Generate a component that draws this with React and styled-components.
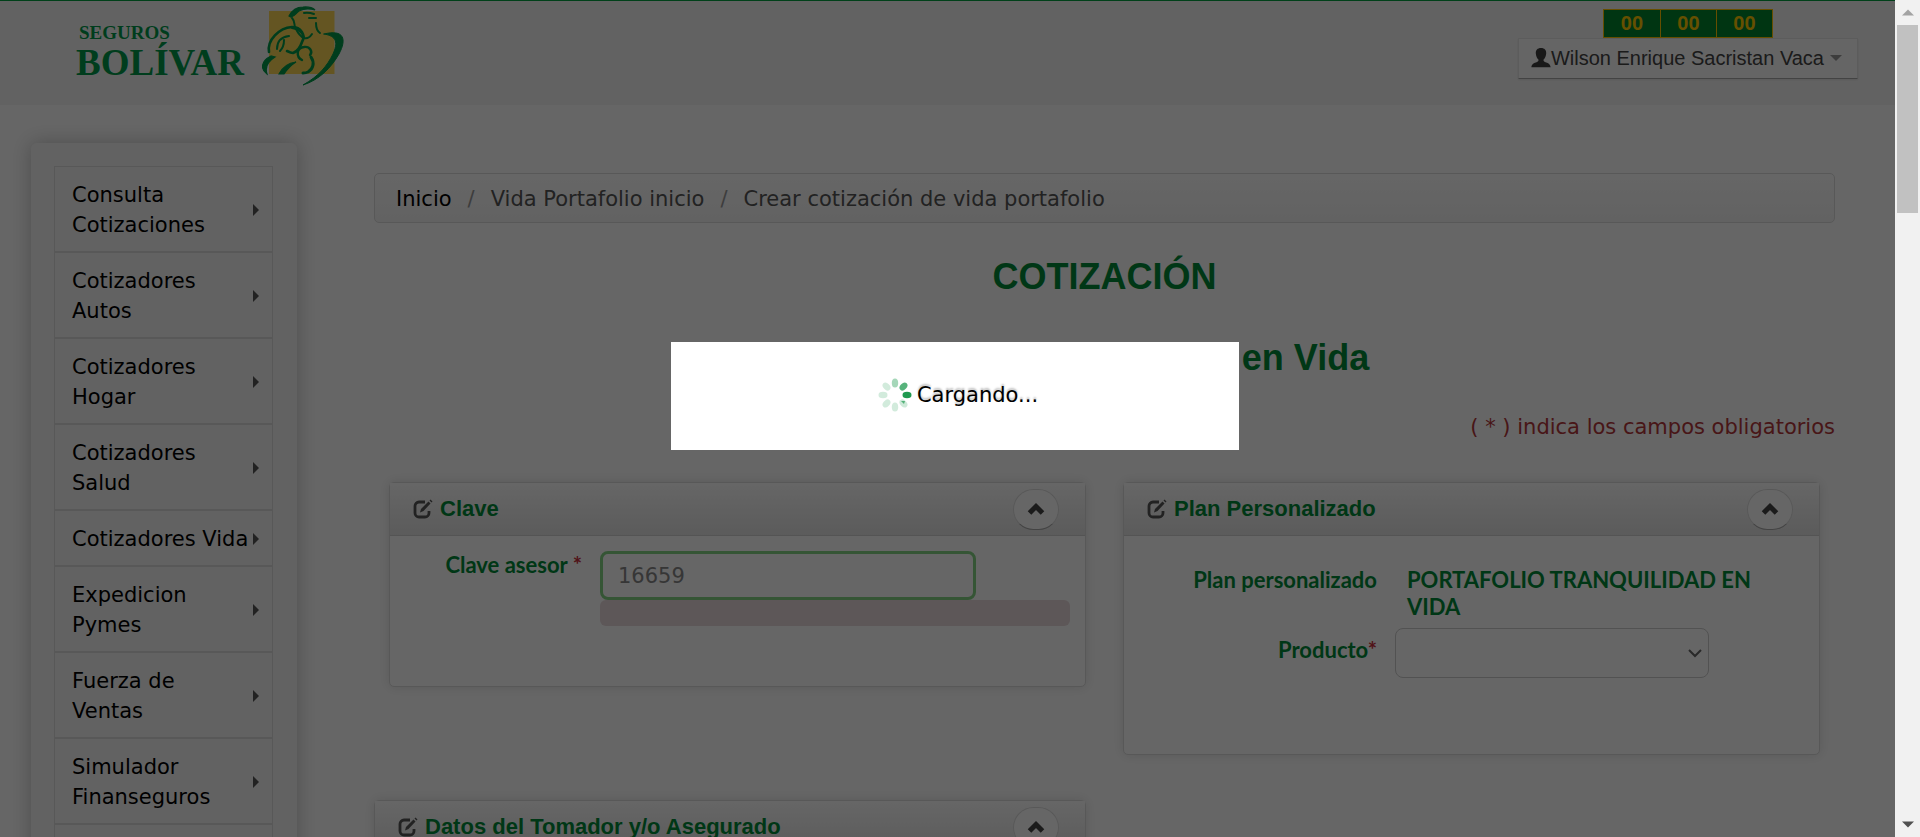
import React from 'react';
import styled, { createGlobalStyle } from 'styled-components';

const GREEN = '#008a37';
const SANS = '"DejaVu Sans", Verdana, sans-serif';
const ARIAL = '"Liberation Sans", Arial, sans-serif';
const LATO = 'Lato, "Liberation Sans", sans-serif';

const GlobalStyle = createGlobalStyle`
  *, *::before, *::after { box-sizing: border-box; }
  body { margin: 0; background: #fff; color: #000; font: 21px/30px ${SANS}; overflow: hidden; }
  a { color: inherit; text-decoration: none; }
`;

const Shell = styled.div`
  display: flex;
  height: 100vh;
`;

const Viewport = styled.div`
  position: relative;
  flex: 1;
  min-width: 0;
  overflow: hidden;
`;

const Header = styled.header`
  display: flex;
  justify-content: space-between;
  align-items: flex-start;
  height: 105px;
  padding: 0 37px 0 76px;
  background: #f6f6f6;
  border-top: 1px solid #00a040;
`;

const Brand = styled.a`
  display: flex;
  align-items: flex-start;
`;

const BrandName = styled.span`
  display: flex;
  flex-direction: column;
  width: 186px;
  padding-top: 21px;
  color: #00994a;
  font-family: "Liberation Serif", serif;
  font-weight: 700;
`;

const BrandSmall = styled.span`
  padding-left: 3px;
  font-size: 19px;
  line-height: 22px;
`;

const BrandBig = styled.span`
  font-size: 37px;
  line-height: 38px;
`;

const Account = styled.div`
  display: flex;
  flex-direction: column;
  align-items: center;
  padding-top: 8px;
  font-family: ${ARIAL};
`;

const Counter = styled.div`
  display: flex;
  border: 1px solid #ffc400;
`;

const Count = styled.span`
  width: 56px;
  height: 27px;
  line-height: 27px;
  text-align: center;
  font-size: 20px;
  font-weight: 700;
  color: #ffc800;
  background: #00862f;
  & + & { border-left: 1px solid #ffc400; }
`;

const UserButton = styled.button`
  display: flex;
  align-items: center;
  height: 41px;
  padding: 0 15px 2px 12px;
  background: #fdfdfd;
  border: 1px solid #e6e6e6;
  border-bottom-color: #a8a8a8;
  box-shadow: 0 1px 2px rgba(0, 0, 0, .1);
  color: #444;
  font: 20px/24px ${ARIAL};
`;

const Caret = styled.span`
  margin-left: 6px;
  border: 6px solid transparent;
  border-top-color: #999;
  border-bottom: 0;
`;

const Columns = styled.div`
  display: flex;
  align-items: flex-start;
  padding: 38px 60px 0 31px;
`;

const Sidebar = styled.nav`
  flex: none;
  width: 266px;
  padding: 23px 24px 23px 23px;
  background: #f6f6f6;
  border-radius: 6px;
  box-shadow: 0 0 20px rgba(0, 0, 0, .25);
`;

const Menu = styled.ul`
  margin: 0;
  padding: 0;
  list-style: none;
`;

const MenuLink = styled.a`
  display: flex;
  align-items: center;
  justify-content: space-between;
  gap: 4px;
  padding: 13px 13px 11px 17px;
  border: 1px solid #dcdcdc;
  &::after {
    content: "";
    flex: none;
    border: 6px solid transparent;
    border-left-color: #555;
    border-right: 0;
  }
`;

const MenuEnd = styled.li`
  height: 86px;
  border: 1px solid #dcdcdc;
`;

const Main = styled.main`
  flex: 1;
  min-width: 0;
  margin-left: 77px;
  padding-top: 30px;
`;

const Breadcrumb = styled.ol`
  display: flex;
  margin: 0;
  padding: 10px 21px 8px;
  list-style: none;
  border: 1px solid #dcdcdc;
  border-radius: 5px;
  background: linear-gradient(#fff, #f5f5f5);
  color: #555;
`;

const Crumb = styled.li`
  & + &::before { content: "/"; padding: 0 16px; color: #999; }
  a { color: #000; }
`;

const Title = styled.h1`
  margin: ${(p) => p.$top}px 0 0;
  color: ${GREEN};
  font: 700 36px/44px ${ARIAL};
  text-align: center;
`;

const Required = styled.p`
  margin: 32px 0 40px;
  text-align: right;
  color: #b5373b;
`;

const PanelGrid = styled.div`
  display: grid;
  grid-template-columns: 1fr 1fr;
  align-items: start;
  gap: 37px;
  padding: 0 15px;
`;

const PanelRow = styled.div`
  width: 50%;
  margin-top: 45px;
  padding-right: 19px;
`;

const Panel = styled.section`
  min-height: ${(p) => p.$min}px;
  border: 1px solid #dcdcdc;
  border-radius: 5px;
  box-shadow: 0 0 12px rgba(0, 0, 0, .12);
  background: #fff;
`;

const PanelHead = styled.div`
  display: flex;
  align-items: center;
  height: 53px;
  padding: 0 26px 0 23px;
  border-bottom: 1px solid #d2d2d2;
  background: linear-gradient(#fff, #e4e4e4);
  color: #555;
`;

const PanelTitle = styled.h2`
  flex: 1;
  margin: 0 0 0 7px;
  color: ${GREEN};
  font: 700 22px/30px ${ARIAL};
`;

const Toggle = styled.button`
  display: grid;
  place-items: center;
  width: 46px;
  height: 41px;
  padding: 0;
  border: 1px solid #dcdcdc;
  border-bottom-color: #a8a8a8;
  border-radius: 23px;
  background: #fff;
  color: #444;
`;

const Fields = styled.div`
  display: grid;
  grid-template-columns: ${(p) => p.$cols};
  column-gap: ${(p) => p.$gap}px;
  row-gap: 8px;
  padding: ${(p) => p.$pad};
  color: ${GREEN};
  font: 700 22px/27px ${LATO};
`;

const Label = styled.label`
  padding-top: ${(p) => p.$top || 0}px;
  text-align: right;
`;

const Star = styled.span`
  color: #c9303b;
`;

const Value = styled.output`
  padding: 0 50px 0 12px;
`;

const TextInput = styled.input`
  display: block;
  width: 376px;
  max-width: 100%;
  height: 49px;
  padding: 0 15px;
  border: 3px solid #86d486;
  border-radius: 8px;
  outline: 0;
  background: #fff;
  color: #555;
  font: 21px/30px ${SANS};
  &::placeholder { color: #888; opacity: 1; }
`;

const ErrorBox = styled.div`
  height: 26px;
  border-radius: 6px;
  background: #e8d9dc;
`;

const SelectWrap = styled.div`
  position: relative;
  width: 314px;
  svg { position: absolute; right: 7px; top: 18px; pointer-events: none; }
`;

const Select = styled.select`
  appearance: none;
  width: 100%;
  height: 50px;
  border: 1px solid #ccc;
  border-radius: 8px;
  background: #fff;
`;

const Overlay = styled.div`
  position: absolute;
  inset: 0;
  display: flex;
  justify-content: center;
  align-items: flex-start;
  padding: 342px 0 0 15px;
  background: rgba(0, 0, 0, .6);
`;

const Loading = styled.div`
  display: flex;
  align-items: center;
  justify-content: center;
  gap: 5px;
  width: 568px;
  height: 108px;
  padding: 0 0 2px 6px;
  background: #fff;
  text-shadow: 0 -2px 2px rgba(0, 0, 0, .25);
`;

const Scrollbar = styled.div`
  flex: none;
  display: flex;
  flex-direction: column;
  align-items: center;
  width: 25px;
  background: #f1f1f1;
`;

const ScrollArrow = styled.span`
  display: grid;
  place-items: center;
  height: 25px;
`;

const Thumb = styled.span`
  width: 21px;
  height: 188px;
  margin-bottom: auto;
  background: #c1c1c1;
`;

const LogoMark = () => (
  <svg width="84" height="88" viewBox="262 1 84 88" fill="none" stroke="#00994a" strokeLinecap="round" aria-hidden="true">
    <path d="M269 11h65.500v63H269z" fill="#f9d556" stroke="none" />
    <path d="M289 16c3-6 8-9 14-9 6-.5 10 1 12 3-5-1.500-11-1.500-16 1-3 2-4 5-8 6z" fill="#00994a" strokeWidth="1.200" />
    <path d="M292 18c3 3 2 6 3 9 2 4 4 9 9 11 3 1 6-1 8-4" strokeWidth="2" />
    <path d="M304 13c4-.5 7 0 10 1M309 18h7M316 23c0 4 1 8 4 10" strokeWidth="2" />
    <path d="M269 52c-2-12 10-24 23-25 9 0 14 8 10 15-2 6-6 10-9 11-2 0-4-1-6-2" strokeWidth="2.600" />
    <path d="M292 28c6 1 10 4 12 9M289 36c-8 1-12 6-12 13M284 40c0 5-1 8-4 11" strokeWidth="2" />
    <path d="M302 60c-6-3-6-12 2-13 6-1 9 5 6 8" strokeWidth="2.400" />
    <path d="M311 57c4 6 2 12-3 15-2 1-3 1-5 1" strokeWidth="3" />
    <path d="M279 74c3-6 9-11 17-12-5 3-8 6-12 12z" fill="#00994a" strokeWidth="1.200" />
    <path d="M271 56c-10 5-11 13-4 18-2-6 0-12 8-17z" fill="#00994a" strokeWidth="1.200" />
    <path d="M324 34c20-5 23 5 15 20-8 14-20 26-36 31 16-9 24-19 30-31 5-11 4-18-9-20z" fill="#00994a" strokeWidth="1" />
  </svg>
);

const UserIcon = () => (
  <svg width="20" height="20" viewBox="0 0 20 20" fill="#3c3c3c" aria-hidden="true">
    <path d="M10 0c3.500 0 5.500 2.200 5.200 5.500-.2 2.600-1.200 4.800-2.600 6-.3 1.200.1 2 1.400 2.500 3 1.100 5.400 2 5.600 5.300H.4C.6 16 3 15.100 6 14c1.300-.5 1.700-1.300 1.400-2.500-1.400-1.200-2.400-3.400-2.600-6C4.500 2.200 6.500 0 10 0z" />
  </svg>
);

const EditIcon = () => (
  <svg width="20" height="20" viewBox="0 0 20 20" fill="none" stroke="#555" strokeWidth="2.800" aria-hidden="true">
    <path d="M12 3H6a4 4 0 0 0-4 4v7a4 4 0 0 0 4 4h6a4 4 0 0 0 4-4v-2" />
    <path d="M7 13.500l1-3.500L15.500 2.500l2 2L10.500 12z" fill="#555" stroke="none" />
    <path d="M16.500 1.500l1-1 2 2-1 1z" fill="#555" stroke="none" />
  </svg>
);

const ChevronUp = () => (
  <svg width="18" height="14" viewBox="0 0 18 14" fill="none" stroke="#444" strokeWidth="5" aria-hidden="true">
    <path d="M2.500 11L9 4.500l6.500 6.500" />
  </svg>
);

const Spinner = () => (
  <svg width="34" height="34" viewBox="-17 -17 34 34" fill="#1f9a50" aria-hidden="true">
    {[0.4, 0.75, 1, 0.22, 0.2, 0.2, 0.2, 0.2].map((o, i) => (
      <ellipse key={i} cx="0" cy="-12" rx="3.200" ry="4.500" opacity={o} transform={`rotate(${i * 45})`} />
    ))}
    <path d="M6 6l4 0-1 3z" opacity=".7" />
  </svg>
);

const MENU = [
  'Consulta Cotizaciones', 'Cotizadores Autos', 'Cotizadores Hogar', 'Cotizadores Salud',
  'Cotizadores Vida', 'Expedicion Pymes', 'Fuerza de Ventas', 'Simulador Finanseguros',
];

const Box = ({ title, min, children }) => (
  <Panel $min={min}>
    <PanelHead>
      <EditIcon />
      <PanelTitle>{title}</PanelTitle>
      <Toggle type="button" aria-label={`Contraer ${title}`}><ChevronUp /></Toggle>
    </PanelHead>
    {children}
  </Panel>
);

export default function App() {
  return (
    <Shell>
      <GlobalStyle />
      <Viewport>
        <Header>
          <Brand href="#inicio">
            <BrandName>
              <BrandSmall>SEGUROS</BrandSmall>
              <BrandBig>BOLÍVAR</BrandBig>
            </BrandName>
            <LogoMark />
          </Brand>
          <Account>
            <Counter><Count>00</Count><Count>00</Count><Count>00</Count></Counter>
            <UserButton type="button"><UserIcon />Wilson Enrique Sacristan Vaca<Caret /></UserButton>
          </Account>
        </Header>
        <Columns>
          <Sidebar>
            <Menu>
              {MENU.map((m) => <li key={m}><MenuLink href="#menu">{m}</MenuLink></li>)}
              <MenuEnd />
            </Menu>
          </Sidebar>
          <Main>
            <Breadcrumb>
              <Crumb><a href="#inicio">Inicio</a></Crumb>
              <Crumb>Vida Portafolio inicio</Crumb>
              <Crumb>Crear cotización de vida portafolio</Crumb>
            </Breadcrumb>
            <Title $top={32}>COTIZACIÓN</Title>
            <Title as="h2" $top={37}>Portafolio Tranquilidad en Vida</Title>
            <Required>( * ) indica los campos obligatorios</Required>
            <PanelGrid>
              <Box title="Clave" min={205}>
                <Fields $cols="192px 1fr" $gap={18} $pad="15px 15px 0 0">
                  <Label htmlFor="clave">Clave asesor <Star>*</Star></Label>
                  <div>
                    <TextInput id="clave" placeholder="16659" autoFocus />
                    <ErrorBox />
                  </div>
                </Fields>
              </Box>
              <Box title="Plan Personalizado" min={273}>
                <Fields $cols="253px 1fr" $gap={18} $pad="30px 0 0 0">
                  <Label htmlFor="plan">Plan personalizado</Label>
                  <Value id="plan">PORTAFOLIO TRANQUILIDAD EN VIDA</Value>
                  <Label htmlFor="producto" $top={8}>Producto<Star>*</Star></Label>
                  <SelectWrap>
                    <Select id="producto" />
                    <svg width="14" height="14" viewBox="0 0 14 14" fill="none" stroke="#666" strokeWidth="2"><path d="M1 4l6 6 6-6" /></svg>
                  </SelectWrap>
                </Fields>
              </Box>
            </PanelGrid>
            <PanelRow>
              <Box title="Datos del Tomador y/o Asegurado" min={300} />
            </PanelRow>
          </Main>
        </Columns>
        <Overlay>
          <Loading role="status"><Spinner />Cargando...</Loading>
        </Overlay>
      </Viewport>
      <Scrollbar aria-hidden="true">
        <ScrollArrow><svg width="12" height="7" viewBox="0 0 12 7"><path d="M0 6.500L6 .5l6 6z" fill="#a3a3a3" /></svg></ScrollArrow>
        <Thumb />
        <ScrollArrow><svg width="12" height="7" viewBox="0 0 12 7"><path d="M0 .5h12l-6 6z" fill="#505050" /></svg></ScrollArrow>
      </Scrollbar>
    </Shell>
  );
}
